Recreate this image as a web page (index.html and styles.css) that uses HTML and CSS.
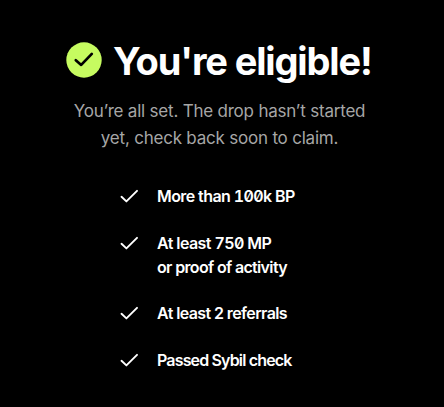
FILE: index.html
```html
<!DOCTYPE html>
<html lang="en">
<head>
<meta charset="utf-8">
<title>Eligibility</title>
<link rel="stylesheet" href="styles.css">
</head>
<body>
<main class="panel">
  <header class="heading">
    <svg class="badge" viewBox="0 0 36 36" aria-hidden="true"><circle cx="18" cy="18" r="17.7" fill="#c6fb60"/><path d="M9.8 18.2 15.2 22.9 25.8 11.9" fill="none" stroke="#000" stroke-width="2.7" stroke-linecap="round" stroke-linejoin="round"/></svg>
    <h1 class="title">You're eligible!</h1>
  </header>
  <p class="lead">You’re all set. The drop hasn’t started<br>yet, check back soon to claim.</p>
  <ul class="checks">
    <li class="check"><svg class="tick" viewBox="0 0 18 14" aria-hidden="true"><path d="M1.5 7.8 6.4 12.4 17 1.8"/></svg><span class="bp">More than <span class="num">100</span>k BP</span></li>
    <li class="check"><svg class="tick" viewBox="0 0 18 14" aria-hidden="true"><path d="M1.5 7.8 6.4 12.4 17 1.8"/></svg><span><span class="mp">At least <span class="num">750</span> MP</span><br><span class="proof">or proof of activity</span></span></li>
    <li class="check"><svg class="tick" viewBox="0 0 18 14" aria-hidden="true"><path d="M1.5 7.8 6.4 12.4 17 1.8"/></svg><span class="referrals">At least 2 referrals</span></li>
    <li class="check"><svg class="tick" viewBox="0 0 18 14" aria-hidden="true"><path d="M1.5 7.8 6.4 12.4 17 1.8"/></svg><span class="sybil">Passed Sybil check</span></li>
  </ul>
</main>
</body>
</html>
```
FILE: styles.css
```css
* { box-sizing: border-box; }
body { margin: 0; background: #000; color: #fff; font-family: Inter, "Liberation Sans", sans-serif; }
.panel { width: 444px; height: 407px; padding-top: 36px; overflow: hidden; }
.heading { display: flex; align-items: center; height: 48px; padding-left: 66px; gap: 11px; }
.badge { width: 36px; height: 36px; flex: none; }
.title { margin: 0; padding-top: 1px; font-size: 38px; line-height: 48px; font-weight: 700; letter-spacing: -1.14px; white-space: nowrap; }
.lead { margin: 14px 0 0; padding-right: 5px; text-align: center; color: #a6a6a6; font-size: 17px; line-height: 27px; white-space: nowrap; letter-spacing: -0.21px; }
.checks { list-style: none; margin: 32px 0 0; padding: 0 0 0 120px; display: grid; gap: 22.6px; }
.check { display: flex; gap: 19px; font-size: 16px; line-height: 24px; font-weight: 600; letter-spacing: -0.55px; white-space: nowrap; }
.tick { width: 18px; height: 14px; margin-top: 5px; flex: none; fill: none; stroke: #fff; stroke-width: 1.9; stroke-linecap: round; stroke-linejoin: round; }
.num { font-feature-settings: "zero", "tnum"; }
.bp { letter-spacing: -0.58px; }
.proof { letter-spacing: -0.66px; }
.referrals { letter-spacing: -0.6px; }
.sybil { letter-spacing: -0.84px; }
```
